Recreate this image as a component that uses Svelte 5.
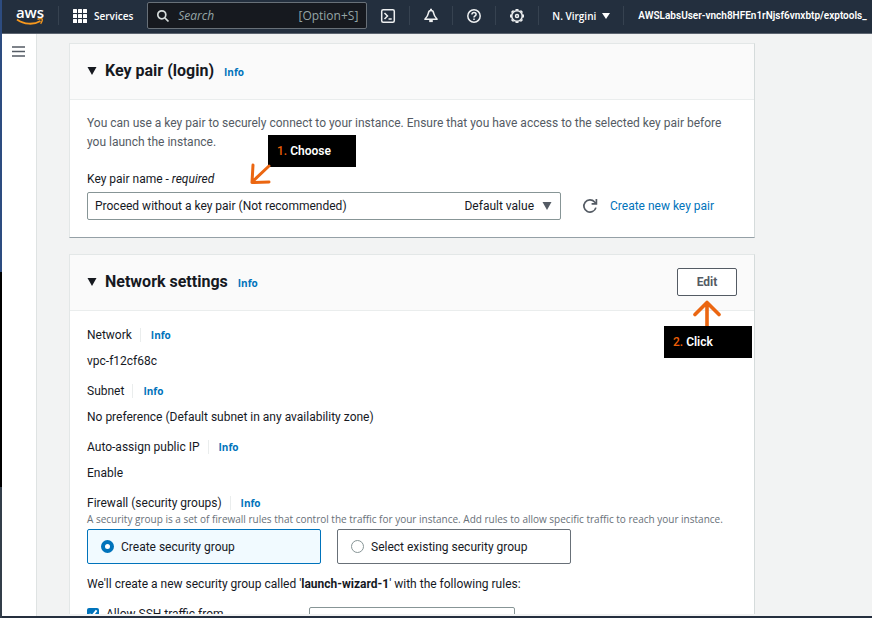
<script>
  const navIcons = ['shell', 'bell', 'help', 'gear'];
  const details = [
    { label: 'Network', value: 'vpc-f12cf68c' },
    { label: 'Subnet', value: 'No preference (Default subnet in any availability zone)' },
    { label: 'Auto-assign public IP', value: 'Enable' }
  ];
  let group = $state('create');
  let keyOpen = $state(true);
  let networkOpen = $state(true);
</script>

<div class="screen">
  <div class="edge" aria-hidden="true"><i class="blue"></i><i class="black"></i><i class="slate"></i></div>
  <div class="window">
    <header>
      <a class="logo" href="#home" aria-label="AWS home">
        <span>aws</span>
        <svg viewBox="0 0 28 8" width="28" height="8"><path d="M1 1.5C8 6.7 18 7 24.5 3" fill="none" stroke="#f7981d" stroke-width="1.8"/><path d="M21.5 1.4c2-.9 4.3-.8 4.7-.3.4.6-.2 3-1.6 4.6" fill="none" stroke="#f7981d" stroke-width="1.3"/></svg>
      </a>
      <i class="rule"></i>
      <button class="services">
        <svg viewBox="0 0 14 14" width="14" height="14" fill="#fff">
          {#each [0, 5, 10] as y}{#each [0, 5, 10] as x}<rect {x} {y} width="4" height="4" rx=".5" />{/each}{/each}
        </svg>
        Services
      </button>
      <label class="search">
        <svg viewBox="0 0 14 14" width="14" height="14" fill="none" stroke="#d5dbdb" stroke-width="1.7"><circle cx="5.8" cy="5.8" r="4"/><path d="M8.800 8.800 12.500 12.500"/></svg>
        <input type="search" placeholder="Search" aria-label="Search" />
        <kbd>[Option+S]</kbd>
      </label>
      {#each navIcons as icon, i}
        {#if i > 0}<i class="rule"></i>{/if}
        <button class="tool" aria-label={icon}>
          <svg viewBox="0 0 16 16" width="16" height="16" fill="none" stroke="#eef0f1" stroke-width="1.5">
            {#if icon === 'shell'}
              <rect x="1.700" y="1.700" width="12.600" height="12.600" rx="1.500"/><path d="m4.500 5 3 3-3 3M8.500 11h3.200"/>
            {:else if icon === 'bell'}
              <path d="M8 2.600C6.600 2.600 5.500 3.700 5.300 5.300 5 7.600 3.800 9.100 1.900 11.200h12.200C12.200 9.100 11 7.600 10.700 5.300 10.500 3.700 9.400 2.600 8 2.600Z" stroke-linejoin="round"/><path d="M8 .8v2" stroke-width="2"/><path d="M6.200 12.800h3.600" stroke-width="2.600"/>
            {:else if icon === 'help'}
              <circle cx="8" cy="8" r="6.200"/><path d="M5.900 6.500C6 5.200 6.800 4.600 8 4.600s2.100.7 2.100 1.800C10.100 7.800 8 7.900 8 9.500M8 10.500v1.500"/>
            {:else}
              <circle cx="8" cy="8" r="5.300" stroke-width="1.6"/><circle cx="8" cy="8" r="1.500" stroke-width="1.5"/><path d="M8 1v1.500M8 13.500V15M1 8h1.500M13.500 8H15M3 3l1 1M12 12l1 1M3 13l1-1M12 4l1-1" stroke-width="3"/>
            {/if}
          </svg>
        </button>
      {/each}
      <i class="rule"></i>
      <button class="region">N. Virgini <svg viewBox="0 0 8 6" width="8" height="6"><path d="M0 0h8L4 6Z" fill="#fff"/></svg></button>
      <i class="rule"></i>
      <button class="account">AWSLabsUser-vnch8HFEn1rNjsf6vnxbtp/exptools_</button>
    </header>

    <div class="body">
      <nav aria-label="Side navigation">
        <button aria-label="Open navigation">
          <svg viewBox="0 0 13 11" width="13" height="11" stroke="#545b64" stroke-width="1.4"><path d="M0 1h13M0 5.500h13M0 10h13"/></svg>
        </button>
      </nav>
      <main>
        <section class="card">
          <div class="head">
            <h2><button class="toggle" aria-expanded={keyOpen} onclick={() => (keyOpen = !keyOpen)}><svg viewBox="0 0 10 8" width="10" height="8"><path d="M.5 0h9L5 8Z" fill="#16191f"/></svg>Key pair (login)</button></h2>
            <a class="info" href="#key-info">Info</a>
          </div>
          {#if keyOpen}
            <div class="content key">
              <p class="intro">You can use a key pair to securely connect to your instance. Ensure that you have access to the selected key pair before you launch the instance.</p>
              <div class="field">
                <label for="key-pair">Key pair name - <em>required</em></label>
                <div class="keyrow">
                  <div class="select">
                    <select id="key-pair"><option>Proceed without a key pair (Not recommended)</option></select>
                    <span class="hint">Default value <svg viewBox="0 0 10 8" width="10" height="8"><path d="M.5 0h9L5 8Z" fill="#545b64"/></svg></span>
                  </div>
                  <button class="refresh" aria-label="Refresh key pairs">
                    <svg viewBox="0 0 16 16" width="16" height="16" fill="none" stroke="#545b64" stroke-width="1.7"><path d="M13.900 9.600A6.100 6.100 0 1 1 12.600 4L14 5.400"/><path d="M14.400 1v4.800H9.600"/></svg>
                  </button>
                  <a class="create" href="#new-key">Create new key pair</a>
                </div>
                <div class="callout choose">
                  <svg viewBox="0 0 22 22" width="22" height="22" fill="none" stroke="#eb6611" stroke-width="3" stroke-linecap="round" stroke-linejoin="round"><path d="M20 3 3 19M4 2 3 19.500 20 19"/></svg>
                  <span><b>1.</b> Choose</span>
                </div>
              </div>
            </div>
          {/if}
        </section>

        <section class="card">
          <div class="head">
            <h2><button class="toggle" aria-expanded={networkOpen} onclick={() => (networkOpen = !networkOpen)}><svg viewBox="0 0 10 8" width="10" height="8"><path d="M.5 0h9L5 8Z" fill="#16191f"/></svg>Network settings</button></h2>
            <a class="info" href="#network-info">Info</a>
            <div class="action">
              <button class="edit">Edit</button>
              <div class="callout click">
                <svg viewBox="0 0 28 26" width="28" height="26" fill="none" stroke="#eb6611" stroke-width="3.6" stroke-linecap="round" stroke-linejoin="round"><path d="M14 28V3M2 14.500 14 2.500 26 14.500"/></svg>
                <span><b>2.</b> Click</span>
              </div>
            </div>
          </div>
          {#if networkOpen}
            <div class="content">
              <dl>
                {#each details as d}
                  <dt>{d.label}<a class="info split" href="#info">Info</a></dt>
                  <dd>{d.value}</dd>
                {/each}
              </dl>
              <fieldset>
                <legend>Firewall (security groups)<a class="info split" href="#info">Info</a></legend>
                <p class="help">A security group is a set of firewall rules that control the traffic for your instance. Add rules to allow specific traffic to reach your instance.</p>
                <div class="tiles">
                  <label class:selected={group === 'create'}><input type="radio" value="create" bind:group /> Create security group</label>
                  <label class:selected={group === 'existing'}><input type="radio" value="existing" bind:group /> Select existing security group</label>
                </div>
              </fieldset>
              <p class="note">We'll create a new security group called '<strong>launch-wizard-1</strong>' with the following rules:</p>
              <div class="ssh">
                <label><input type="checkbox" checked /> Allow SSH traffic from</label>
                <select aria-label="SSH source"><option></option></select>
              </div>
            </div>
          {/if}
        </section>
      </main>
    </div>
  </div>
</div>

<style>
  :global(body) { margin: 0; overflow: hidden; }
  * { box-sizing: border-box; }
  .screen { display: flex; height: 100vh; font: 12px/20px Roboto, "Open Sans", sans-serif; color: #16191f; background: #f2f3f3; }
  button, input, select { font: inherit; color: inherit; margin: 0; }
  button { border: 0; background: none; padding: 0; cursor: pointer; }
  a { color: #0073bb; text-decoration: none; }
  h2, p, dl, dd { margin: 0; }
  svg { display: block; flex: none; }

  .edge { width: 2px; flex: none; display: flex; flex-direction: column; }
  .edge i { display: block; }
  .blue { flex: 272; background: #2d4c80; }
  .black { flex: 215; background: #000; }
  .slate { flex: 131; background: #333d49; }

  .window { flex: 1; min-width: 0; display: flex; flex-direction: column; border-bottom: 2px solid #252f3e; }
  header { height: 34px; flex: none; display: flex; align-items: center; background: #232f3e; border-bottom: 1px solid #5c6470; color: #fff; overflow: hidden; padding-bottom: 2px; font-family: "Open Sans", sans-serif; font-size: 10px; font-weight: 600; white-space: nowrap; }
  header > * { flex: none; }
  .logo { display: flex; flex-direction: column; align-items: center; width: 28px; margin: 0 14px; color: #fff; font-size: 15px; line-height: 14px; font-weight: 600; }
  .logo svg { margin-top: -1px; }
  .rule { width: 1px; height: 19px; background: #364250; }
  .services { display: flex; align-items: center; gap: 7px; margin: 0 14px; }
  .search { display: flex; align-items: center; width: 220px; height: 27px; padding: 0 8px; gap: 8px; border: 1px solid #687078; border-radius: 2px; background: #16191f; font-weight: 400; font-size: 12px; color: #95a5a6; }
  .search input { flex: 1; min-width: 0; border: 0; padding: 0; background: none; outline: 0; }
  .search input::placeholder { color: #95a5a6; font-style: italic; opacity: 1; }
  .search kbd { font: inherit; }
  .tool { width: 42px; display: flex; justify-content: center; }
  .region { display: flex; align-items: center; gap: 6px; margin: 0 13px; }
  .account { margin-left: 14px; font-family: Roboto, sans-serif; }

  .body { flex: 1; min-height: 0; display: flex; }
  nav { width: 35px; flex: none; background: #fff; border-right: 1px solid #dfe3e3; padding: 9px 10px; }
  main { flex: 1; min-width: 0; overflow: hidden; padding: 9px 117px 0 32px; margin-bottom: 2px; }
  .card { background: #fff; border: 1px solid #e3e7e7; border-right-color: #d5dbdb; border-bottom-color: #95a0a6; margin-bottom: 16px; }
  .head { display: flex; align-items: center; height: 56px; padding: 0 17px 2px; background: #fafafa; border-bottom: 1px solid #eaeded; }
  h2 { font-size: 16px; line-height: 20px; }
  .toggle { display: flex; align-items: center; gap: 8px; font-weight: 700; }
  .info { font-family: "Open Sans", sans-serif; font-size: 10px; font-weight: 700; margin-left: 10px; }
  .head .info { padding-top: 3px; }
  .split { border-left: 1px solid #eaeded; padding-left: 10px; margin-left: 8px; }
  .content { padding: 14px 17px; }
  .key { padding-bottom: 17px; }
  .intro { color: #545b64; line-height: 19px; }
  .field { position: relative; margin-top: 17px; }
  .field > label { display: block; }
  .keyrow { display: flex; align-items: center; margin-top: 3px; }
  .select { position: relative; width: 474px; }
  select { appearance: none; width: 100%; height: 28px; padding: 0 7px; border: 1px solid #879596; border-radius: 2px; background: #fff; }
  .hint { position: absolute; right: 9px; top: 4px; display: flex; align-items: center; gap: 8px; pointer-events: none; }
  .refresh { margin: 0 12px 0 21px; }
  .callout { position: absolute; z-index: 1; font-weight: 600; color: #fff; }
  .callout span { display: block; width: 88px; height: 32px; padding: 6px 9px; background: #000; }
  .callout b { color: #eb5f07; font-weight: 500; }
  .choose { left: 181px; top: -34px; }
  .choose svg { position: absolute; left: -19px; top: 28px; }
  .action { position: relative; margin-left: auto; }
  .click { left: -13px; top: 32px; }
  .click svg { margin-left: 29px; }
  .edit { display: block; width: 60px; height: 28px; border: 1px solid #545b64; border-radius: 2px; background: #fff; color: #545b64; font-weight: 700; }
  dt { margin-bottom: 6px; }
  dd { margin-bottom: 10px; }
  fieldset { border: 0; margin: 0; padding: 0; min-width: 0; }
  legend { padding: 0; }
  .help { font-family: "Open Sans", sans-serif; color: #687078; font-size: 10px; line-height: 12px; white-space: nowrap; }
  .tiles { display: flex; gap: 16px; margin-top: 4px; }
  .tiles label { display: flex; align-items: center; width: 234px; height: 35px; padding: 0 13px; gap: 7px; border: 1px solid #687078; border-radius: 2px; }
  .tiles .selected { border-color: #0073bb; background: #f1faff; }
  input[type="radio"] { appearance: none; width: 13px; height: 13px; border: 1px solid #879596; border-radius: 50%; background: #fff; }
  input[type="radio"]:checked { border: 4px solid #0073bb; }
  .note { margin-top: 10px; }
  .ssh { display: flex; align-items: flex-start; margin-top: 13px; }
  .ssh label { display: flex; align-items: center; gap: 7px; width: 222px; line-height: 14px; }
  .ssh input { width: 12px; height: 12px; accent-color: #0073bb; }
  .ssh select { width: 206px; }
</style>
